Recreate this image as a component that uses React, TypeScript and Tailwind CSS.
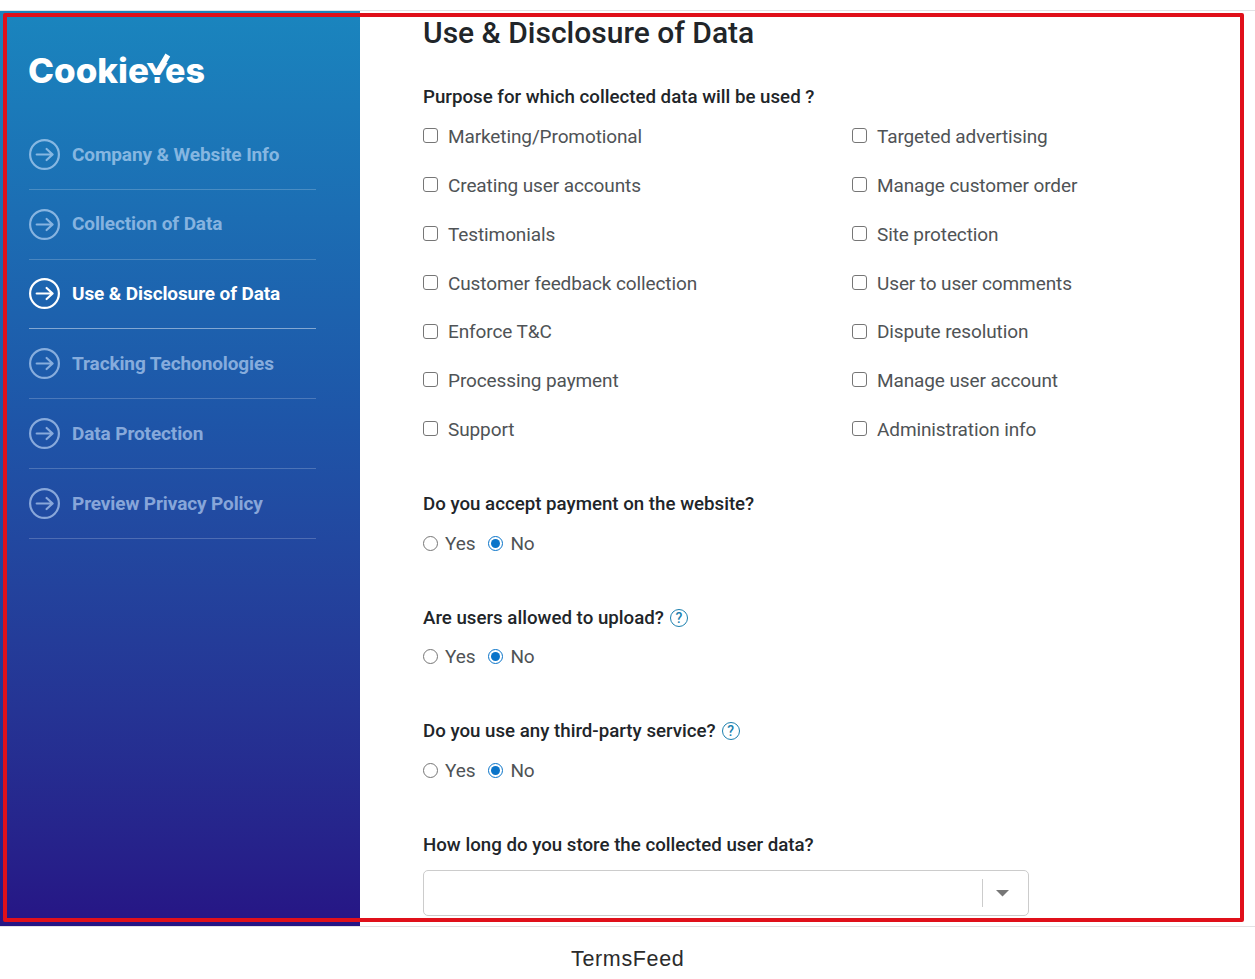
import * as React from "react";

const steps = [
  "Company & Website Info",
  "Collection of Data",
  "Use & Disclosure of Data",
  "Tracking Techonologies",
  "Data Protection",
  "Preview Privacy Policy",
];

const purposes = [
  ["Marketing/Promotional", "Targeted advertising"],
  ["Creating user accounts", "Manage customer order"],
  ["Testimonials", "Site protection"],
  ["Customer feedback collection", "User to user comments"],
  ["Enforce T&C", "Dispute resolution"],
  ["Processing payment", "Manage user account"],
  ["Support", "Administration info"],
];

const questions = [
  { id: "payment", label: "Do you accept payment on the website?", help: false },
  { id: "upload", label: "Are users allowed to upload?", help: true },
  { id: "thirdParty", label: "Do you use any third-party service?", help: true },
];

const Logo = () => (
  <svg width="190" height="56" viewBox="0 -10 190 56" fill="#fff" className="block">
    <g fontFamily="Inter, sans-serif" fontWeight="800" fontSize="34">
      <text x="-1" y="31" textLength="121" lengthAdjust="spacingAndGlyphs">
        Cookie
      </text>
      <text x="117" y="31" fontSize="27" textLength="22" lengthAdjust="spacingAndGlyphs">
        Y
      </text>
      <text x="136" y="31" textLength="40" lengthAdjust="spacingAndGlyphs">
        es
      </text>
    </g>
    {/* tick arm, and the gap that turns the stem into a dot */}
    <path d="M128 21.5L138.8 3" stroke="#fff" strokeWidth="5.5" />
    <path d="M124.5 24H132" stroke="#1b7bba" strokeWidth="2" />
  </svg>
);

const ArrowCircle = () => (
  <svg width="31" height="31" viewBox="0 0 31 31" fill="none" stroke="currentColor" className="shrink-0">
    <circle cx="15.5" cy="15.5" r="14.4" strokeWidth="2.2" />
    <path d="M7.7 15.5H23.5M17.6 10l6 5.5-6 5.5" strokeWidth="2.2" strokeLinecap="round" strokeLinejoin="round" />
  </svg>
);

const HelpIcon = () => (
  <span className="flex size-[18px] items-center justify-center rounded-full border border-[#1b7fae] text-[14px] leading-none font-medium text-[#1b7fae]">
    ?
  </span>
);

const Checkbox = ({ label }: { label: string }) => (
  <label className="flex items-center">
    <span className="size-[15px] rounded-[3px] border border-[#767676] bg-white" />
    <span className="ml-[10px] pt-[3px]">{label}</span>
  </label>
);

interface RadioProps {
  label: string;
  checked: boolean;
  onSelect: () => void;
}

const Radio = ({ label, checked, onSelect }: RadioProps) => (
  <label className="flex items-center" onClick={onSelect}>
    <span
      className={
        checked
          ? "flex size-[15px] items-center justify-center rounded-full border-[1.5px] border-[#0a74c9]"
          : "flex size-[15px] items-center justify-center rounded-full border border-[#767676]"
      }
    >
      {checked && <span className="size-[9px] rounded-full bg-[#0a74c9]" />}
    </span>
    <span className="ml-[7px] pt-[2px]">{label}</span>
  </label>
);

const App: React.FC = () => {
  const [answers, setAnswers] = React.useState<Record<string, string>>({
    payment: "No",
    upload: "No",
    thirdParty: "No",
  });

  return (
    <div className="relative h-[979px] w-[1255px] overflow-hidden bg-white pt-[10px] font-[Roboto,sans-serif]">
      <div className="flex h-[917px] border-y border-[#e2e2e4]">
        {/* Sidebar */}
        <aside className="h-[915px] w-[360px] bg-linear-to-b from-[#1a85be] via-[#1e55a8] via-45% to-[#261585] pt-[31px] pl-[29px]">
          <Logo />
          <nav className="mt-[22px] w-[287px]">
            {steps.map((step, i) => (
              <div
                key={step}
                className={
                  i === 2
                    ? "flex h-[69.8px] items-center border-b border-white/45 text-white"
                    : "flex h-[69.8px] items-center border-b border-white/20 text-[#cfe4ff]/60"
                }
              >
                <ArrowCircle />
                <span className="ml-[12px] pt-[1px] text-[19px] font-bold tracking-[-0.11px]">{step}</span>
              </div>
            ))}
          </nav>
        </aside>

        {/* Form */}
        <main className="flex-1 pt-[2px] pl-[63px] text-[#4f5356]">
          <h1 className="h-[40px] text-[30px] leading-[40px] font-medium text-[#212529]">
            Use &amp; Disclosure of Data
          </h1>
          <h2 className="mt-[29px] h-[29.5px] text-[18.7px] leading-[30px] font-medium text-[#212529]">
            Purpose for which collected data will be used ?
          </h2>
          {purposes.map(([left, right]) => (
            <div key={left} className="grid h-[48.8px] grid-cols-[429px_1fr] items-center text-[19px] tracking-[-0.11px]">
              <Checkbox label={left} />
              <Checkbox label={right} />
            </div>
          ))}

          <div className="mt-[36px]">
            {questions.map((q) => (
              <div key={q.id} className="h-[113.6px]">
                <h2 className="flex h-[30px] items-center text-[18.7px] font-medium text-[#212529]">
                  <span className="mr-[6px]">{q.label}</span>
                  {q.help && <HelpIcon />}
                </h2>
                <div className="mt-[9px] flex h-[30px] items-center gap-[13px] text-[19px] tracking-[-0.11px]">
                  {["Yes", "No"].map((option) => (
                    <Radio
                      key={option}
                      label={option}
                      checked={answers[q.id] === option}
                      onSelect={() => setAnswers({ ...answers, [q.id]: option })}
                    />
                  ))}
                </div>
              </div>
            ))}
          </div>

          <h2 className="h-[30px] text-[18.7px] leading-[30px] font-medium text-[#212529]">
            How long do you store the collected user data?
          </h2>
          <div className="mt-[10.5px] flex h-[46px] w-[606px] items-center justify-end rounded-[5px] border border-[#cccccc]">
            <div className="flex h-[28px] w-[46px] items-center border-l border-[#cccccc] pl-[13px]">
              <svg width="13" height="7" viewBox="0 0 13 7" fill="#777">
                <path d="M0 0h13L6.5 6.5z" />
              </svg>
            </div>
          </div>
        </main>
      </div>

      <footer className="pt-[18px] pl-[571px] text-[21.5px] leading-[28px] tracking-[0.65px] text-[#2b2b2b] font-['Liberation_Sans',Arial,sans-serif]">
        TermsFeed
      </footer>

      {/* Highlight frame drawn over the whole form */}
      <div className="pointer-events-none absolute top-[13px] left-[3px] h-[909px] w-[1241px] rounded-[2px] border-4 border-[#e0101a]" />
    </div>
  );
};

export default App;
